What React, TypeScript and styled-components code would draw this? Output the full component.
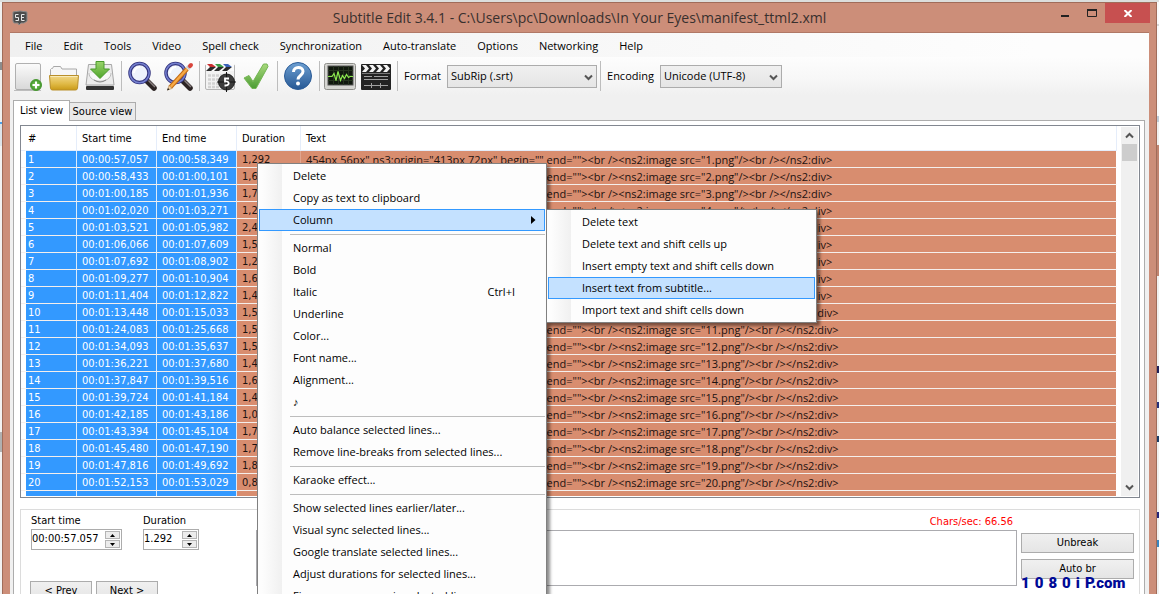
import React from "react";
import styled, { createGlobalStyle } from "styled-components";

const UI = '"Open Sans", "Noto Sans", sans-serif';
const GRID = '"DejaVu Sans Condensed", "DejaVu Sans", sans-serif';

const GlobalStyle = createGlobalStyle`
  * { box-sizing: border-box; }
  body {
    margin: 0;
    overflow: hidden;
    background: #f4f4f4;
    color: #000;
    font: 11px/16px ${UI};
  }
`;

const Desktop = styled.div`
  display: flex;
  height: 100vh;
  padding-top: 2px;
  overflow: hidden;
  background: #dcdedc;
`;

const LeftStrip = styled.div`
  flex: 0 0 2px;
  background: linear-gradient(#f0f0f0 60px, #8c8c8c 60px 68px, #f0f0f0 68px 120px, #4aa0e8 120px 122px, #dde4ea 122px 144px, #f2f2f2 144px 430px, #b0b0b0 430px 450px, #f2f2f2 450px);
`;

const RightStrip = styled.div`
  flex: 0 0 2px;
  background: linear-gradient(#fafafa 22px, #d8d8d8 22px 24px, #fafafa 24px 114px, #c0ccd8 114px 120px, #f0f0f0 120px 143px, #c08470 143px 274px, #f0f0f0 274px 364px, #20205a 364px 371px, #f0f0f0 371px 400px, #26307a 400px 406px, #f0f0f0 406px 434px, #1c3c66 434px 440px, #f0f0f0 440px 510px, #26267a 510px 516px, #f0f0f0 516px 538px, #3a86c0 538px 545px, #f0f0f0 545px);
`;

const Window = styled.main`
  position: relative;
  flex: 1;
  min-width: 0;
  display: flex;
  flex-direction: column;
  padding: 0 7px;
  border: 1px solid #a06c5a;
  border-bottom: 0;
  background: #cc8e79;
`;

const TitleBar = styled.header`
  position: relative;
  flex: 0 0 29px;
  display: flex;
  align-items: center;
  justify-content: center;
`;

const AppBadge = styled.svg`
  position: absolute;
  left: 2px;
  top: 7px;
`;

const Title = styled.h1`
  margin: 0;
  font: 400 14px/20px ${UI};
  color: #38302e;
`;

const Captions = styled.div`
  position: absolute;
  right: -1px;
  top: 0;
  display: flex;
`;

const CaptionButton = styled.button<{ $close?: boolean }>`
  display: flex;
  align-items: center;
  justify-content: center;
  width: ${(p) => (p.$close ? 45 : 27)}px;
  height: 20px;
  padding: 0;
  border: 0;
  background: ${(p) => (p.$close ? "#c75050" : "transparent")};
`;

const Client = styled.div`
  flex: 1;
  min-height: 0;
  display: flex;
  flex-direction: column;
  overflow: hidden;
  border-top: 1px solid #b07866;
  background: #f0f0f0;
`;

const MenuBar = styled.nav`
  flex: 0 0 24px;
  display: flex;
  align-items: center;
  gap: 21px;
  padding: 1px 15px 0;
  background: linear-gradient(90deg, #f0f0f0, #fdfdfd 90%);
`;

const MenuLink = styled.button`
  padding: 0;
  border: 0;
  background: none;
  color: inherit;
  font: 11px/16px ${UI};
`;

const ToolBar = styled.div`
  flex: 0 0 38px;
  display: flex;
  align-items: center;
  background: linear-gradient(#fdfdfd, #f7f7f7 60%, #f0f0f0);
`;

const ToolButton = styled.button`
  display: flex;
  flex: 0 0 36px;
  justify-content: center;
  height: 36px;
  align-items: center;
  padding: 0;
  border: 0;
  background: none;
`;

const ToolRule = styled.span`
  flex: 0 0 1px;
  height: 30px;
  margin: 0 2px 0 3px;
  background: #bdbdbd;
`;

const ToolLabel = styled.label`
  margin: 0 6px 0 4px;
`;

const SelectBox = styled.span<{ $width: number }>`
  position: relative;
  width: ${(p) => p.$width}px;
  svg {
    position: absolute;
    right: 4px;
    top: 9px;
    pointer-events: none;
  }
`;

const Select = styled.select`
  display: block;
  appearance: none;
  width: 100%;
  height: 23px;
  padding: 0 3px;
  border: 1px solid #acacac;
  border-radius: 0;
  background: linear-gradient(#f0f0f0, #e5e5e5);
  color: #000;
  font: 11px/16px ${UI};
`;

const Tabs = styled.div`
  flex: 0 0 25px;
  display: flex;
  align-items: flex-end;
  padding: 0 3px;
`;

const Tab = styled.button<{ $active?: boolean }>`
  position: relative;
  z-index: 1;
  height: ${(p) => (p.$active ? 21 : 18)}px;
  width: ${(p) => (p.$active ? 57 : 66)}px;
  margin-bottom: ${(p) => (p.$active ? -1 : 0)}px;
  padding: 0;
  border: 1px solid #acacac;
  border-bottom: 0;
  border-left-width: ${(p) => (p.$active ? 1 : 0)}px;
  background: ${(p) => (p.$active ? "#fff" : "#eaeaea")};
  color: #000;
  font: 11px/16px ${GRID};
  white-space: nowrap;
`;

const Page = styled.section`
  flex: 1;
  min-height: 0;
  display: flex;
  flex-direction: column;
  gap: 11px;
  margin: 0 4px 0 3px;
  padding: 4px 4px 0 6px;
  border: 1px solid #acacac;
  border-bottom: 0;
  background: #fff;
`;

const List = styled.div`
  flex: 1;
  min-height: 0;
  display: flex;
  overflow: hidden;
  border: 1px solid #828790;
`;

const ListBody = styled.div`
  flex: 1;
  min-width: 0;
  overflow: hidden;
  margin-bottom: 1px;
`;

const Table = styled.table`
  width: 100%;
  table-layout: fixed;
  border-collapse: separate;
  border-spacing: 0;
  font: 11px/14px ${GRID};
`;

const HeadCell = styled.th<{ $width?: number; $spacer?: boolean }>`
  width: ${(p) => (p.$width ? p.$width + "px" : "auto")};
  height: 25px;
  padding: ${(p) => (p.$spacer ? "0" : "2px 5px 0")};
  border-right: 1px solid ${(p) => (p.$spacer ? "#fff" : "#e5edfa")};
  border-bottom: 1px solid #e5edfa;
  font-weight: 400;
  text-align: left;
  &:nth-child(2) { padding-left: 2px; }
`;

const Cell = styled.td<{ $tone: "none" | "blue" | "orange" }>`
  height: 17px;
  padding: 2px 5px 0;
  overflow: hidden;
  white-space: nowrap;
  border-bottom: 1px solid #f5efec;
  border-right: 1px solid ${(p) => ({ none: "#fff", blue: "#dcebfc", orange: "#e2a68f" })[p.$tone]};
  background: ${(p) => ({ none: "#fff", blue: "#3399ff", orange: "#d88d6f" })[p.$tone]};
  color: ${(p) => (p.$tone === "blue" ? "#fff" : "#1c1210")};
  &:first-child { padding: 0; }
  &:nth-child(2) { padding-left: 2px; }
  &:last-child {
    padding-top: 1px;
    border-right-color: #fff;
    font-family: ${UI};
  }
`;

const ScrollBar = styled.div`
  flex: 0 0 17px;
  display: flex;
  flex-direction: column;
  align-items: center;
  margin: 1px 1px 1px 4px;
  background: #f0f0f0;
`;

const ScrollArrow = styled.button`
  display: flex;
  align-items: center;
  justify-content: center;
  width: 17px;
  height: 17px;
  padding: 0;
  border: 0;
  background: none;
`;

const Thumb = styled.div`
  width: 15px;
  height: 17px;
  margin-bottom: auto;
  background: #cdcdcd;
`;

const Editor = styled.div`
  flex: 0 0 85px;
  display: flex;
  overflow: hidden;
  padding: 3px 5px 0 9px;
  border: 1px solid #dcdcdc;
  border-bottom: 0;
  font: 11px/16px ${GRID};
`;

const Timing = styled.div`
  flex: 0 0 226px;
`;

const FieldRow = styled.div`
  display: flex;
  gap: 21px;
  padding-left: 1px;
`;

const Field = styled.label`
  display: flex;
  flex-direction: column;
`;

const Spinner = styled.span<{ $width: number }>`
  display: flex;
  width: ${(p) => p.$width}px;
  height: 21px;
  border: 1px solid #acacac;
  background: #fff;
`;

const SpinInput = styled.input`
  flex: 1;
  min-width: 0;
  padding: 0 0 2px;
  border: 0;
  background: none;
  color: #000;
  font: 11px/16px ${GRID};
`;

const SpinButtons = styled.span`
  flex: 0 0 15px;
  display: flex;
  flex-direction: column;
  gap: 1px;
  margin: 1px;
`;

const SpinButton = styled.button`
  flex: 1;
  display: flex;
  align-items: center;
  justify-content: center;
  padding: 0;
  border: 1px solid #b4b4b4;
  background: #ececec;
`;

const ButtonRow = styled.div`
  display: flex;
  gap: 4px;
  margin-top: 31px;
`;

const PushButton = styled.button<{ $width: number }>`
  width: ${(p) => p.$width}px;
  height: 20px;
  padding: 0;
  border: 1px solid #acacac;
  background: linear-gradient(#f0f0f0, #e5e5e5);
  color: #000;
  font: 11px/16px ${GRID};
`;

const TextColumn = styled.div`
  flex: 1;
  min-width: 0;
  display: flex;
  flex-direction: column;
`;

const Rate = styled.span`
  align-self: flex-end;
  padding-right: 4px;
  color: #f00;
  line-height: 17px;
`;

const TextBox = styled.textarea`
  display: block;
  width: 100%;
  height: 56px;
  resize: none;
  border: 1px solid #ababaf;
  background: #fff;
`;

const SideButtons = styled.div`
  position: relative;
  display: flex;
  flex-direction: column;
  gap: 6px;
  padding: 20px 0 0 4px;
`;

const Watermark = styled.div`
  position: absolute;
  left: 4px;
  top: 62px;
  display: flex;
  gap: 5px;
  color: #000a96;
  font: 900 15px/16px Roboto, sans-serif;
`;

const Popup = styled.ul<{ $left: number; $top: number; $width: number }>`
  position: absolute;
  left: ${(p) => p.$left}px;
  top: ${(p) => p.$top}px;
  width: ${(p) => p.$width}px;
  margin: 0;
  padding: 1px;
  list-style: none;
  border: 1px solid #808080;
  background: linear-gradient(90deg, #fdfdfd 4px, #f0f0f0 24px, #fdfdfd 24px);
  box-shadow: 3px 3px 3px rgba(0, 0, 0, 0.45);
`;

const PopupItem = styled.button<{ $active?: boolean }>`
  display: flex;
  align-items: center;
  justify-content: space-between;
  width: 100%;
  height: 22px;
  padding: 0 29px 0 33px;
  border: 1px solid ${(p) => (p.$active ? "#3399ff" : "transparent")};
  background: ${(p) => (p.$active ? "#c4e1ff" : "none")};
  color: #000;
  font: 11px/16px ${UI};
  white-space: nowrap;
  svg { margin-right: -21px; }
`;

const PopupRule = styled.li`
  height: 6px;
  margin-left: 31px;
  padding-top: 3px;
  &::before {
    content: "";
    display: block;
    height: 1px;
    background: #bdbdbd;
  }
`;

const Chevron = ({ up }: { up?: boolean }) => (
  <svg width="9" height="7" viewBox="0 0 9 7" aria-hidden="true">
    <path d={up ? "M1 5.5 4.5 2 8 5.5" : "M1 1.5 4.5 5 8 1.5"} fill="none" stroke="#555" strokeWidth="2" />
  </svg>
);

const Triangle = ({ up }: { up?: boolean }) => (
  <svg width="5" height="3" viewBox="0 0 5 3" aria-hidden="true">
    <path d={up ? "M0 3 2.5 0 5 3z" : "M0 0h5L2.5 3z"} fill="#000" />
  </svg>
);

const NewIcon = () => (
  <svg width="32" height="32" viewBox="0 0 32 32">
    <defs>
      <linearGradient id="paper" x2="0" y2="1"><stop stopColor="#fbfbfb" /><stop offset="1" stopColor="#d8d8d8" /></linearGradient>
      <radialGradient id="plus"><stop stopColor="#8fd36a" /><stop offset="1" stopColor="#3d9426" /></radialGradient>
    </defs>
    <rect x="3.500" y="3.500" width="25" height="26" rx="1.500" fill="url(#paper)" stroke="#b0b0b0" />
    <path d="M2 30.500h27" stroke="#9a9a9a" opacity=".6" />
    <circle cx="24" cy="25" r="5.500" fill="url(#plus)" stroke="#4c9a35" />
    <path d="M24 21.500v7M20.500 25h7" stroke="#fff" strokeWidth="2" />
  </svg>
);

const OpenIcon = () => (
  <svg width="32" height="32" viewBox="0 0 32 32">
    <defs>
      <linearGradient id="gold" x2="0" y2="1"><stop stopColor="#f2d98a" /><stop offset=".6" stopColor="#dfb843" /><stop offset="1" stopColor="#c99a18" /></linearGradient>
    </defs>
    <path d="M2.500 16V9.500l1-1h1l1-2h7l1.500 2.500h14.500V16z" fill="#f6f6f6" stroke="#a8a8a8" />
    <path d="M1.500 15.500h29l-1 13a2 2 0 0 1-2 1.500h-23a2 2 0 0 1-2-1.500z" fill="url(#gold)" stroke="#b98f2a" />
    <path d="M2.500 16.500h27" stroke="#f9ebb8" />
  </svg>
);

const SaveIcon = () => (
  <svg width="32" height="32" viewBox="0 0 32 32">
    <defs>
      <linearGradient id="arrow" x2="0" y2="1"><stop stopColor="#9ad46c" /><stop offset="1" stopColor="#4fa52a" /></linearGradient>
    </defs>
    <path d="M4.500 4.500h23L30 25H2z" fill="#ececec" stroke="#a6a6a6" />
    <path d="M5 13c0 11 22 11 22 0" fill="#f8f8f8" stroke="#bcbcbc" />
    <path d="M10 20q6 4 12 0" fill="none" stroke="#8a8a8a" />
    <rect x="2" y="26" width="28" height="4" rx="1" fill="#333" />
    <path d="M2 25.500h28" stroke="#c4c4c4" />
    <path d="M12 1.500h8V9h5.500L16 18.500 6.500 9H12z" fill="url(#arrow)" stroke="#4a9a2c" />
  </svg>
);

const Lens = () => (
  <>
    <path d="M20 20 28 28" stroke="#2c2424" strokeWidth="5.500" strokeLinecap="round" />
    <path d="m22.500 20.500 6.500 6.500" stroke="#8a8080" strokeWidth="1.500" />
    <circle cx="13.500" cy="13" r="9.500" fill="#eef3fc" stroke="#34347e" strokeWidth="3.500" />
    <circle cx="13.500" cy="13" r="9.700" fill="none" stroke="#7480d0" strokeWidth="1.500" />
    <path d="M8 13a6 6 0 0 1 6-6" fill="none" stroke="#fff" strokeWidth="2" />
  </>
);

const FindIcon = () => (
  <svg width="32" height="32" viewBox="0 0 32 32"><Lens /></svg>
);

const ReplaceIcon = () => (
  <svg width="32" height="32" viewBox="0 0 32 32">
    <Lens />
    <path d="M25 9 8.500 27" stroke="#c26a14" strokeWidth="4.500" />
    <path d="M25 9 8.500 27" stroke="#f7a944" strokeWidth="2.500" />
    <path d="m25.500 8.500 2-2" stroke="#c8c8c8" strokeWidth="4.500" />
    <path d="m28 6 1-1" stroke="#d8453c" strokeWidth="4" strokeLinecap="round" />
    <path d="m7 25.500 3 3-4.500 1.500z" fill="#f1d7ab" stroke="#a86c2a" strokeWidth=".5" />
    <path d="m5 30.500 1-2.500 1.500 1.500z" fill="#222" />
  </svg>
);

const SyncIcon = () => (
  <svg width="32" height="32" viewBox="0 0 32 32">
    <rect x="1.500" y="4.500" width="29" height="25" rx="1.500" fill="#f2f2f2" stroke="#b5b5b5" />
    <path d="M2 4h28v7H2z" fill="#fafafa" />
    <path d="m3 4 5 0 4 3H6z" fill="#c83030" />
    <path d="M11 4h5l4 3h-6z" fill="#3a9e48" />
    <path d="M19 4h5l4 3h-6z" fill="#3a62b8" />
    <path d="M6 7h6l-5 4H2zM14 7h6l-5 4h-5zM22 7h6l-5 4h-5z" fill="#2c2c2c" />
    <path d="M4 15.500h24M4 19.500h24M4 23.500h24M4 27h24" stroke="#d2d2d2" strokeDasharray="3 1" strokeWidth="2.500" />
    <circle cx="22.500" cy="22" r="8" fill="#3b3b3b" stroke="#222" />
    <path d="M22.500 12v20M13 22h19" stroke="#161616" />
    <path d="M25 18.500h-4v3c4.500-1 5 4 1 4h-1.500" fill="none" stroke="#fff" strokeWidth="1.800" />
  </svg>
);

const CheckIcon = () => (
  <svg width="32" height="32" viewBox="0 0 32 32">
    <defs>
      <linearGradient id="tick" x2="0" y2="1"><stop stopColor="#a8d97c" /><stop offset="1" stopColor="#4b9c33" /></linearGradient>
    </defs>
    <path d="m4 18 5-2.500 4 6L23.500 4h3.500l1 2.500-12 22h-4z" fill="url(#tick)" stroke="#74b554" strokeLinejoin="round" />
  </svg>
);

const HelpIcon = () => (
  <svg width="32" height="32" viewBox="0 0 32 32">
    <defs>
      <linearGradient id="help" x2="0" y2="1"><stop stopColor="#6d9fd2" /><stop offset="1" stopColor="#265894" /></linearGradient>
    </defs>
    <circle cx="16" cy="16" r="13.500" fill="url(#help)" stroke="#2b5c98" />
    <path d="M11.500 12c0-6 9.500-6 9.500-.5 0 4-5 4-5 8" fill="none" stroke="#fff" strokeWidth="3" />
    <circle cx="16" cy="23.500" r="2" fill="#fff" />
  </svg>
);

const WaveIcon = () => (
  <svg width="32" height="32" viewBox="0 0 32 32">
    <rect x=".5" y="3.500" width="31" height="26" rx="2" fill="#d6d6d2" stroke="#8e8e8a" />
    <rect x="4" y="6" width="25" height="19" fill="#10180e" stroke="#555" />
    <path d="M4 10.500h25M4 15.500h25M4 20.500h25M9.500 6v19M14.500 6v19M19.500 6v19M24.500 6v19" stroke="#26341f" />
    <path d="M4 16.500h4l2-3 2 7 2-9 2.500 9 2-5 2 3 2-4 2 3 1.500-1h3" fill="none" stroke="#8be84e" strokeWidth="1.200" />
  </svg>
);

const VideoIcon = () => (
  <svg width="32" height="32" viewBox="0 0 32 32">
    <rect x="1" y="4" width="30" height="26" rx="1" fill="#222" />
    <path d="m2 5 4 0 3 3.500H5zM9 5h4l3 3.500h-4zM16 5h4l3 3.500h-4zM23 5h4l3 3.500h-4zM5 8.500h4L6 12H2zM12 8.500h4L13 12H9zM19 8.500h4L20 12h-4zM26 8.500h4L27 12h-4z" fill="#f4f4f4" />
    <path d="M2 13.500h28" stroke="#777" />
    <path d="M4 16.500h8M4 19.500h24M14 16.500h14M4 25.500h24M11.500 23v5M20.500 23v5" stroke="#a0a0a0" />
  </svg>
);

const tools: { label: string; icon: React.ReactNode; rule?: boolean }[] = [
  { label: "New", icon: <NewIcon /> },
  { label: "Open", icon: <OpenIcon /> },
  { label: "Save", icon: <SaveIcon />, rule: true },
  { label: "Find", icon: <FindIcon /> },
  { label: "Replace", icon: <ReplaceIcon />, rule: true },
  { label: "Visual sync", icon: <SyncIcon /> },
  { label: "Spell check", icon: <CheckIcon />, rule: true },
  { label: "Help", icon: <HelpIcon />, rule: true },
  { label: "Waveform", icon: <WaveIcon /> },
  { label: "Video", icon: <VideoIcon />, rule: true },
];

const menus = ["File", "Edit", "Tools", "Video", "Spell check", "Synchronization", "Auto-translate", "Options", "Networking", "Help"];

const rows = [
  ["00:00:57,057", "00:00:58,349", "1,292"],
  ["00:00:58,433", "00:01:00,101", "1,668"],
  ["00:01:00,185", "00:01:01,936", "1,751"],
  ["00:01:02,020", "00:01:03,271", "1,251"],
  ["00:01:03,521", "00:01:05,982", "2,461"],
  ["00:01:06,066", "00:01:07,609", "1,543"],
  ["00:01:07,692", "00:01:08,902", "1,210"],
  ["00:01:09,277", "00:01:10,904", "1,627"],
  ["00:01:11,404", "00:01:12,822", "1,418"],
  ["00:01:13,448", "00:01:15,033", "1,585"],
  ["00:01:24,083", "00:01:25,668", "1,585"],
  ["00:01:34,093", "00:01:35,637", "1,544"],
  ["00:01:36,221", "00:01:37,680", "1,459"],
  ["00:01:37,847", "00:01:39,516", "1,669"],
  ["00:01:39,724", "00:01:41,184", "1,460"],
  ["00:01:42,185", "00:01:43,186", "1,001"],
  ["00:01:43,394", "00:01:45,104", "1,710"],
  ["00:01:45,480", "00:01:47,190", "1,710"],
  ["00:01:47,816", "00:01:49,692", "1,876"],
  ["00:01:52,153", "00:01:53,029", "0,876"],
  ["", "", ""],
];

const lineText = (n: number) =>
  `454px 56px" ns3:origin="413px 72px" begin="" end=""><br /><ns2:image src="${n}.png"/><br /></ns2:div>`;

type Entry = { text: string; active?: boolean; keys?: string; sub?: boolean } | null;

const contextMenu: Entry[] = [
  { text: "Delete" },
  { text: "Copy as text to clipboard" },
  { text: "Column", active: true, sub: true },
  null,
  { text: "Normal" },
  { text: "Bold" },
  { text: "Italic", keys: "Ctrl+I" },
  { text: "Underline" },
  { text: "Color..." },
  { text: "Font name..." },
  { text: "Alignment..." },
  { text: "♪" },
  null,
  { text: "Auto balance selected lines..." },
  { text: "Remove line-breaks from selected lines..." },
  null,
  { text: "Karaoke effect..." },
  null,
  { text: "Show selected lines earlier/later..." },
  { text: "Visual sync selected lines..." },
  { text: "Google translate selected lines..." },
  { text: "Adjust durations for selected lines..." },
  { text: "Fix common errors in selected lines..." },
];

const columnMenu: Entry[] = [
  { text: "Delete text" },
  { text: "Delete text and shift cells up" },
  { text: "Insert empty text and shift cells down" },
  { text: "Insert text from subtitle...", active: true },
  { text: "Import text and shift cells down" },
];

const Menu = ({ entries, left, top, width }: { entries: Entry[]; left: number; top: number; width: number }) => (
  <Popup $left={left} $top={top} $width={width}>
    {entries.map((e, i) =>
      e ? (
        <li key={i}>
          <PopupItem $active={e.active}>
            {e.text}
            {e.keys && <span>{e.keys}</span>}
            {e.sub && (
              <svg width="5" height="8" viewBox="0 0 5 8" aria-hidden="true">
                <path d="M0 0v8l4.500-4z" fill="#000" />
              </svg>
            )}
          </PopupItem>
        </li>
      ) : (
        <PopupRule key={i} />
      ),
    )}
  </Popup>
);

const TimeField = ({ label, value, width }: { label: string; value: string; width: number }) => (
  <Field>
    {label}
    <Spinner $width={width}>
      <SpinInput defaultValue={value} />
      <SpinButtons>
        <SpinButton aria-label={`${label} up`}><Triangle up /></SpinButton>
        <SpinButton aria-label={`${label} down`}><Triangle /></SpinButton>
      </SpinButtons>
    </Spinner>
  </Field>
);

export default function App() {
  return (
    <Desktop>
      <GlobalStyle />
      <LeftStrip />
      <Window>
        <TitleBar>
          <AppBadge width="16" height="16" viewBox="0 0 16 16">
            <path d="M1 2q7-2 14 0v9l-3 2-3 0-2 2-1-2H2l-1-2z" fill="#4c4c4c" stroke="#8a8a8a" />
            <path d="M6.500 4.500h-3v3h3V10.500h-3M12.500 4.500h-3v6h3M9.500 7.500h2.500" fill="none" stroke="#e8e8e8" />
          </AppBadge>
          <Title>Subtitle Edit 3.4.1 - C:\Users\pc\Downloads\In Your Eyes\manifest_ttml2.xml</Title>
          <Captions>
            <CaptionButton aria-label="Minimize">
              <svg width="10" height="10"><path d="M1 8h8" stroke="#222" strokeWidth="2" /></svg>
            </CaptionButton>
            <CaptionButton aria-label="Maximize">
              <svg width="10" height="8"><path d="M.5 0v7.500h9V0" fill="none" stroke="#222" /><path d="M0 1h10" stroke="#222" strokeWidth="2" /></svg>
            </CaptionButton>
            <CaptionButton $close aria-label="Close">
              <svg width="8" height="7"><path d="m.5 0 7 7m0-7-7 7" stroke="#fff" strokeWidth="2" /></svg>
            </CaptionButton>
          </Captions>
        </TitleBar>
        <Client>
          <MenuBar>
            {menus.map((m) => <MenuLink key={m}>{m}</MenuLink>)}
          </MenuBar>
          <ToolBar>
            {tools.map((t) => (
              <React.Fragment key={t.label}>
                <ToolButton aria-label={t.label}>{t.icon}</ToolButton>
                {t.rule && <ToolRule />}
              </React.Fragment>
            ))}
            <ToolLabel htmlFor="format">Format</ToolLabel>
            <SelectBox $width={150}>
              <Select id="format"><option>SubRip (.srt)</option></Select>
              <Chevron />
            </SelectBox>
            <ToolRule />
            <ToolLabel htmlFor="encoding">Encoding</ToolLabel>
            <SelectBox $width={122}>
              <Select id="encoding"><option>Unicode (UTF-8)</option></Select>
              <Chevron />
            </SelectBox>
          </ToolBar>
          <Tabs>
            <Tab $active>List view</Tab>
            <Tab>Source view</Tab>
          </Tabs>
          <Page>
            <List>
              <ListBody>
                <Table>
                  <thead>
                    <tr>
                      <HeadCell $width={5} $spacer aria-hidden="true" />
                      <HeadCell $width={51}>#</HeadCell>
                      <HeadCell $width={80}>Start time</HeadCell>
                      <HeadCell $width={80}>End time</HeadCell>
                      <HeadCell $width={64}>Duration</HeadCell>
                      <HeadCell>Text</HeadCell>
                    </tr>
                  </thead>
                  <tbody>
                    {rows.map(([start, end, duration], i) => (
                      <tr key={i}>
                        <Cell $tone="none" />
                        <Cell $tone="blue">{start && i + 1}</Cell>
                        <Cell $tone="blue">{start}</Cell>
                        <Cell $tone="blue">{end}</Cell>
                        <Cell $tone="orange">{duration}</Cell>
                        <Cell $tone="orange">{start && lineText(i + 1)}</Cell>
                      </tr>
                    ))}
                  </tbody>
                </Table>
              </ListBody>
              <ScrollBar>
                <ScrollArrow aria-label="Scroll up"><Chevron up /></ScrollArrow>
                <Thumb />
                <ScrollArrow aria-label="Scroll down"><Chevron /></ScrollArrow>
              </ScrollBar>
            </List>
            <Editor>
              <Timing>
                <FieldRow>
                  <TimeField label="Start time" value="00:00:57.057" width={91} />
                  <TimeField label="Duration" value="1.292" width={56} />
                </FieldRow>
                <ButtonRow>
                  <PushButton $width={62}>&lt; Prev</PushButton>
                  <PushButton $width={62}>Next &gt;</PushButton>
                </ButtonRow>
              </Timing>
              <TextColumn>
                <Rate>Chars/sec: 66.56</Rate>
                <TextBox aria-label="Subtitle text" />
              </TextColumn>
              <SideButtons>
                <PushButton $width={113}>Unbreak</PushButton>
                <PushButton $width={113}>Auto br</PushButton>
                <Watermark>
                  <span>1</span><span>0</span><span>8</span><span>0</span><span>i</span><span>P.com</span>
                </Watermark>
              </SideButtons>
            </Editor>
          </Page>
        </Client>
        <Menu entries={contextMenu} left={254} top={160} width={290} />
        <Menu entries={columnMenu} left={543} top={206} width={271} />
      </Window>
      <RightStrip />
    </Desktop>
  );
}
